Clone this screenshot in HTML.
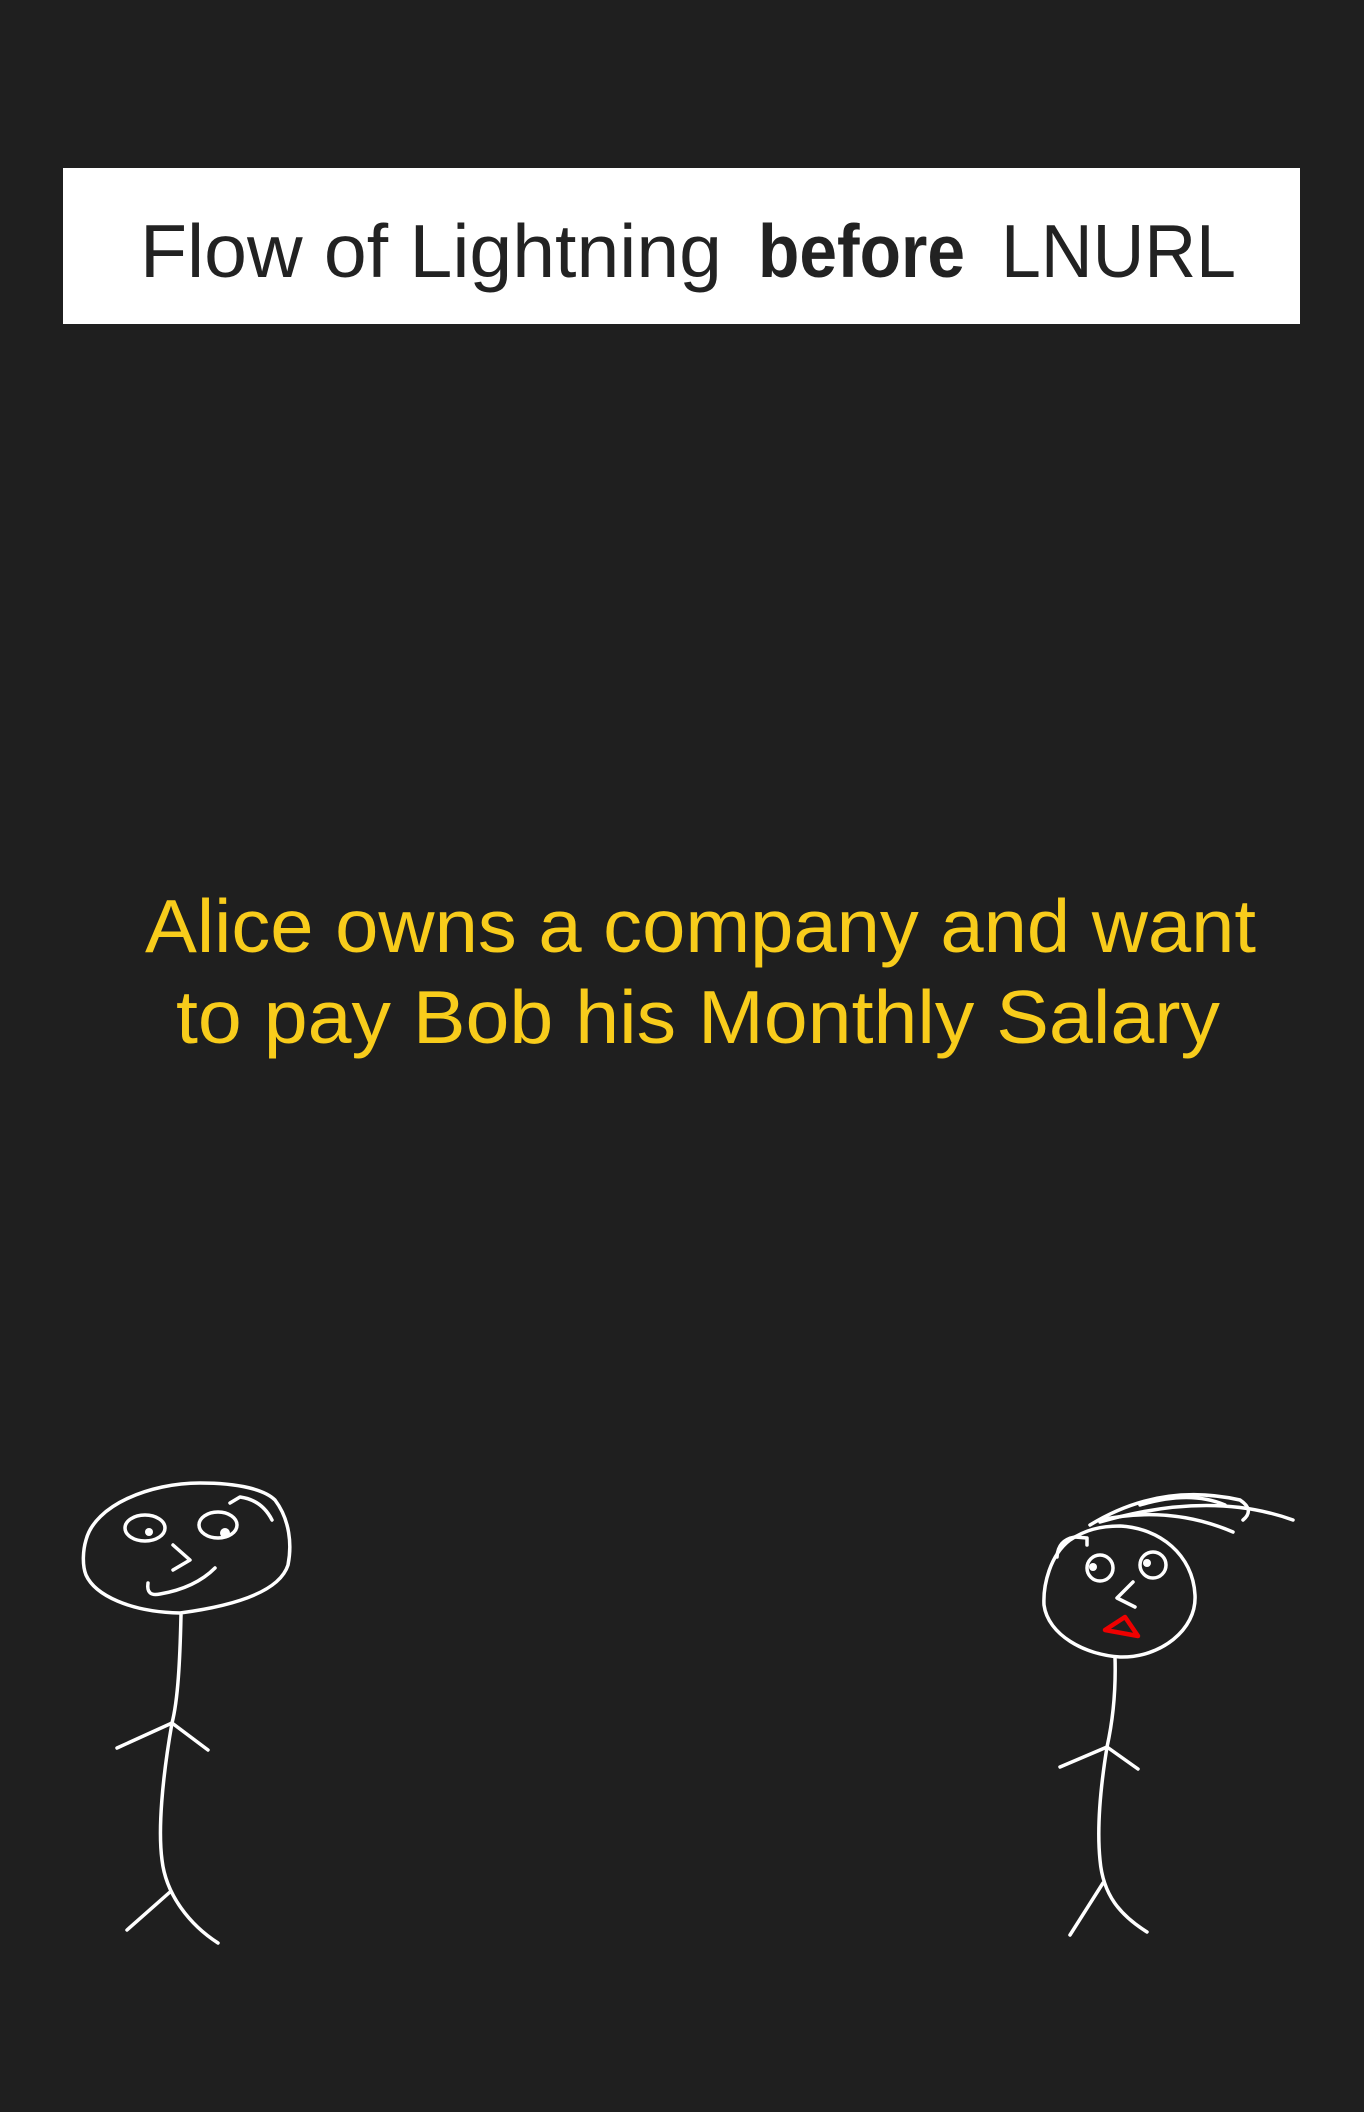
<!DOCTYPE html>
<html><head><meta charset="utf-8"><style>
html,body{margin:0;padding:0;background:#1f1f1f;}
svg{display:block;}
</style></head><body>
<svg width="1364" height="2112" viewBox="0 0 1364 2112" xmlns="http://www.w3.org/2000/svg">
<rect width="1364" height="2112" fill="#1f1f1f"/>
<rect x="63" y="168" width="1237" height="156" fill="#ffffff"/>
<g font-family="Liberation Sans, sans-serif" font-size="75" fill="#222">
<text x="140" y="277" textLength="582" lengthAdjust="spacingAndGlyphs">Flow of Lightning</text>
<text x="758" y="277" font-weight="bold" textLength="207" lengthAdjust="spacingAndGlyphs">before</text>
<text x="1001" y="277" textLength="235" lengthAdjust="spacingAndGlyphs">LNURL</text>
</g>
<g font-family="Liberation Sans, sans-serif" font-size="75" fill="#f8cc1b">
<text x="145" y="952" textLength="1111" lengthAdjust="spacingAndGlyphs">Alice owns a company and want</text>
<text x="176" y="1043" textLength="1044" lengthAdjust="spacingAndGlyphs">to pay Bob his Monthly Salary</text>
</g>
<g fill="none" stroke="#fff" stroke-width="3.5" stroke-linecap="round" stroke-linejoin="round">
<path d="M86 1540 C95 1505 150 1483 200 1483 C240 1483 265 1490 275 1500 C290 1520 292 1545 288 1565 C280 1590 240 1605 180 1613 C130 1612 95 1595 86 1575 C82 1565 83 1550 86 1540"/>
<path d="M230 1503 L240 1497 Q262 1500 272 1520"/>
<ellipse cx="145" cy="1528" rx="20" ry="13"/>
<ellipse cx="218" cy="1525" rx="19" ry="13"/>
<path d="M173 1545 L190 1560 L173 1570"/>
<path d="M148 1583 Q146 1597 160 1594 Q195 1588 215 1568"/>
<path d="M181 1615 C180 1660 178 1700 172 1723 C162 1780 158 1830 162 1860 C166 1895 190 1925 218 1943"/>
<path d="M117 1748 L172 1723 L208 1750"/>
<path d="M170 1892 L127 1930"/>
<path d="M1070 1540 C1050 1555 1043 1585 1044 1605 C1048 1635 1085 1655 1120 1657 C1160 1658 1197 1630 1195 1595 C1193 1555 1160 1528 1120 1526 C1100 1526 1085 1530 1070 1540"/>
<path d="M1057 1557 Q1058 1540 1075 1537 L1087 1538 L1087 1545"/>
<path d="M1090 1525 Q1160 1482 1240 1500 Q1255 1510 1243 1520"/>
<path d="M1100 1522 Q1210 1490 1293 1520"/>
<path d="M1100 1520 Q1170 1505 1233 1532"/>
<path d="M1140 1505 Q1190 1490 1225 1505"/>
<circle cx="1100" cy="1568" r="13"/>
<circle cx="1153" cy="1565" r="13"/>
<path d="M1133 1582 L1117 1598 L1135 1607"/>
<path d="M1115 1657 C1116 1690 1113 1720 1107 1747 C1100 1790 1097 1830 1100 1860 C1103 1895 1120 1915 1147 1932"/>
<path d="M1060 1767 L1107 1747 L1138 1769"/>
<path d="M1103 1883 L1070 1935"/>
</g>
<g fill="#fff">
<circle cx="149" cy="1532" r="4"/>
<circle cx="225" cy="1533" r="5"/>
<circle cx="1093" cy="1567" r="4"/>
<circle cx="1147" cy="1563" r="4"/>
</g>
<path d="M1105 1630 L1125 1617 L1138 1636 Z" fill="none" stroke="#e00" stroke-width="4.5" stroke-linejoin="round"/>
</svg>
</body></html>
